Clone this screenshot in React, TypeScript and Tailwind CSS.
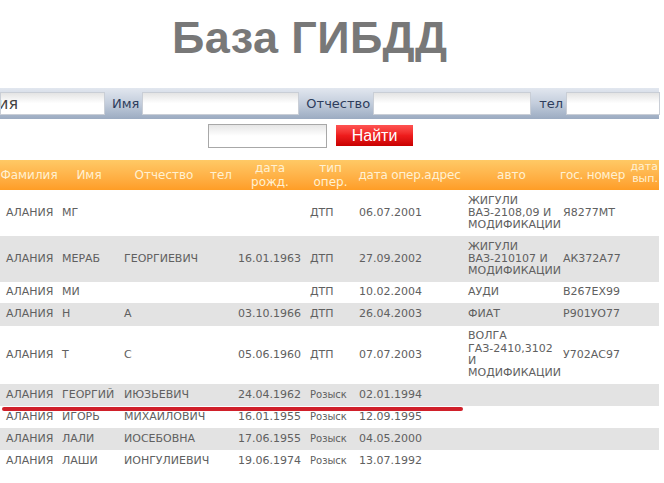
type Row = {
  last: string;
  first: string;
  middle: string;
  born: string;
  op: string;
  opDate: string;
  auto: string[];
  plate: string;
  h: string;
};

const rows: Row[] = [
  { last: 'АЛАНИЯ', first: 'МГ', middle: '', born: '', op: 'ДТП', opDate: '06.07.2001', auto: ['ЖИГУЛИ', 'ВАЗ-2108,09 И', 'МОДИФИКАЦИИ'], plate: 'Я8277МТ', h: 'h-[46px]' },
  { last: 'АЛАНИЯ', first: 'МЕРАБ', middle: 'ГЕОРГИЕВИЧ', born: '16.01.1963', op: 'ДТП', opDate: '27.09.2002', auto: ['ЖИГУЛИ', 'ВАЗ-210107 И', 'МОДИФИКАЦИИ'], plate: 'АК372А77', h: 'h-[46px]' },
  { last: 'АЛАНИЯ', first: 'МИ', middle: '', born: '', op: 'ДТП', opDate: '10.02.2004', auto: ['АУДИ'], plate: 'В267ЕХ99', h: 'h-[21px]' },
  { last: 'АЛАНИЯ', first: 'Н', middle: 'А', born: '03.10.1966', op: 'ДТП', opDate: '26.04.2003', auto: ['ФИАТ'], plate: 'Р901УО77', h: 'h-[23px]' },
  { last: 'АЛАНИЯ', first: 'Т', middle: 'С', born: '05.06.1960', op: 'ДТП', opDate: '07.07.2003', auto: ['ВОЛГА', 'ГАЗ-2410,3102', 'И', 'МОДИФИКАЦИИ'], plate: 'У702АС97', h: 'h-[58px]' },
  { last: 'АЛАНИЯ', first: 'ГЕОРГИЙ', middle: 'ИЮЗЬЕВИЧ', born: '24.04.1962', op: 'Розыск', opDate: '02.01.1994', auto: [], plate: '', h: 'h-[22px]' },
  { last: 'АЛАНИЯ', first: 'ИГОРЬ', middle: 'МИХАЙЛОВИЧ', born: '16.01.1955', op: 'Розыск', opDate: '12.09.1995', auto: [], plate: '', h: 'h-[22px]' },
  { last: 'АЛАНИЯ', first: 'ЛАЛИ', middle: 'ИОСЕБОВНА', born: '17.06.1955', op: 'Розыск', opDate: '04.05.2000', auto: [], plate: '', h: 'h-[22px]' },
  { last: 'АЛАНИЯ', first: 'ЛАШИ', middle: 'ИОНГУЛИЕВИЧ', born: '19.06.1974', op: 'Розыск', opDate: '13.07.1992', auto: [], plate: '', h: 'h-[22px]' },
];

const widths = [58, 62, 88, 26, 72, 49, 55, 54, 95, 67, 33];

function SearchInput({ w, children }: { w: string; children?: React.ReactNode }) {
  return (
    <div
      className={`${w} h-[23px] shrink-0 overflow-hidden border border-[#c9ced6] bg-gradient-to-b from-[#e4e4e4] via-white to-white text-[16px] leading-[21px] text-[#444] whitespace-nowrap`}
    >
      {children}
    </div>
  );
}

export default function App() {
  return (
    <div className="w-[664px] h-[483px] overflow-hidden bg-white font-['DejaVu_Sans',sans-serif]">
      {/* Title */}
      <div className="h-[88px] pt-[10px] pl-[172px]">
        <h1 className="font-['Liberation_Sans',Arial,sans-serif] text-[45px] font-bold leading-[56px] text-[#787878] tracking-[0.4px]">
          База ГИБДД
        </h1>
      </div>

      {/* Search bar */}
      <div className="w-[659px] h-[31px] flex items-center bg-gradient-to-b from-[#e2e7ef] via-[#c3cddc] to-[#9babc1]">
        <SearchInput w="w-[105px]">
          <span className="-ml-[3px]">ия</span>
        </SearchInput>
        <span className="ml-[7px] mr-[3px] text-[13px] text-[#2e3d5c]">Имя</span>
        <SearchInput w="w-[157px]" />
        <span className="ml-[7px] mr-[3px] text-[13px] text-[#2e3d5c]">Отчество</span>
        <SearchInput w="w-[158px]" />
        <span className="ml-[8px] mr-[3px] text-[13px] text-[#2e3d5c]">тел</span>
        <SearchInput w="w-[94px]" />
      </div>

      {/* Second row */}
      <div className="flex items-start pl-[208px] pt-[5px] h-[41px]">
        <div className="w-[119px] h-[24px] border border-[#a8a8a8] bg-gradient-to-b from-[#e6e6e6] via-white to-white" />
        <button className="ml-[9px] mt-[1px] w-[77px] h-[21px] bg-gradient-to-b from-[#ff5252] via-[#ee1c1c] to-[#c80000] font-['Liberation_Sans',Arial,sans-serif] text-[16px] leading-[21px] text-white">
          Найти
        </button>
      </div>

      {/* Results */}
      <table className="table-fixed border-collapse w-[659px] text-[11px] text-[#606060]">
        <colgroup>
          {widths.map((w, i) => (
            <col key={i} style={{ width: w }} />
          ))}
        </colgroup>
        <thead>
          <tr className="h-[30px] bg-gradient-to-b from-[#ffc965] to-[#ff9d25] text-[12px] leading-[14px] text-[#fff1d2]">
            <th className="font-normal text-center whitespace-nowrap">Фамилия</th>
            <th className="font-normal text-center">Имя</th>
            <th className="font-normal text-center">Отчество</th>
            <th className="font-normal text-center">тел</th>
            <th className="font-normal text-center">
              дата
              <br />
              рожд.
            </th>
            <th className="font-normal text-center">
              тип
              <br />
              опер.
            </th>
            <th colSpan={2} className="font-normal text-center whitespace-nowrap tracking-[-0.2px]">
              дата опер.адрес
            </th>
            <th className="font-normal text-center">авто</th>
            <th className="font-normal text-center whitespace-nowrap tracking-[-0.2px]">гос. номер</th>
            <th className="font-normal text-right pr-[1px] text-[11px] leading-[12px] align-top pt-[1px]">
              дата
              <br />
              вып.
            </th>
          </tr>
        </thead>
        <tbody className="leading-[12.3px] whitespace-nowrap">
          {rows.map((r, i) => (
            <tr key={i} className={`${r.h} ${i % 2 === 1 ? 'bg-[#e3e3e3]' : 'bg-white'}`}>
              <td className="pl-[6px]">{r.last}</td>
              <td className="pl-[4px]">{r.first}</td>
              <td className="pl-[4px]">{r.middle}</td>
              <td />
              <td className="pl-[4px]">{r.born}</td>
              <td className={`pl-[4px] ${r.op === 'Розыск' ? 'text-[10px]' : ''}`}>{r.op}</td>
              <td className="pl-[4px]">{r.opDate}</td>
              <td />
              <td className="pl-[4px]">
                {r.auto.map((line, j) => (
                  <div key={j}>{line}</div>
                ))}
              </td>
              <td className="pl-[4px]">{r.plate}</td>
              <td />
            </tr>
          ))}
        </tbody>
      </table>

      {/* Red underline marker */}
      <div className="relative">
        <div className="absolute left-[2px] top-[-65px] w-[461px] h-[4px] rounded-full bg-[#d0202a]" />
      </div>
    </div>
  );
}
